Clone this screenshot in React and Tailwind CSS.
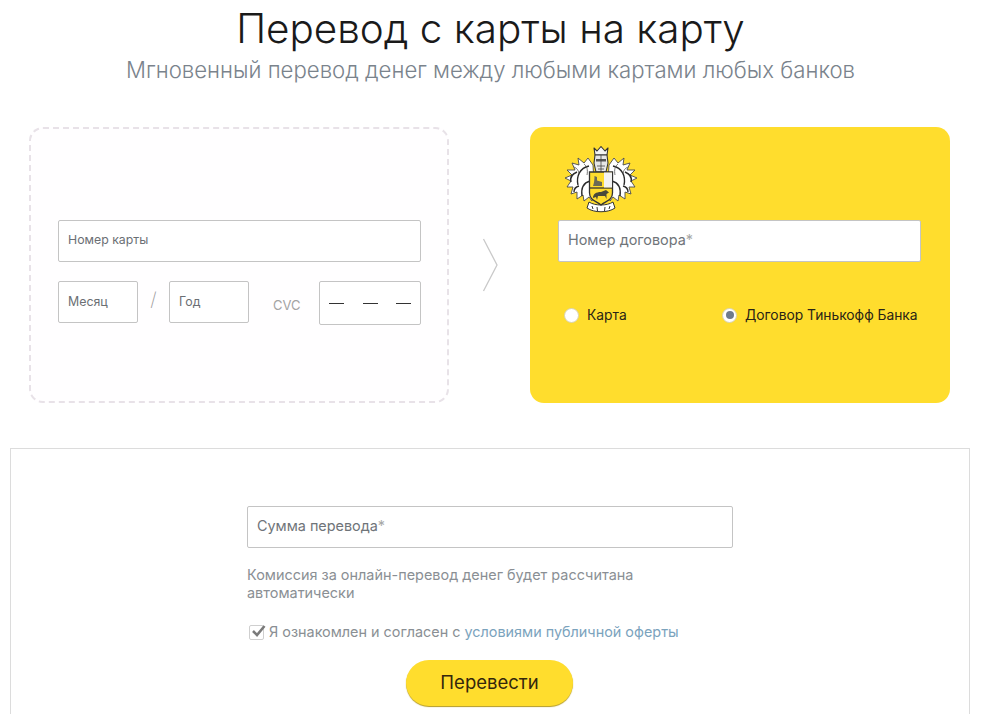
const sans = "font-['Inter','Liberation_Sans',sans-serif]";

function Leaf({ flip }) {
  return (
    <g transform={flip ? "translate(74 0) scale(-1 1)" : undefined}>
      <path
        d="M29 19 L24 12 L20 17 L14 12 L15 19 L8 17 L11 24 L3 24 L8 29 L1 32 L7 35 L3 41 L9 41 L7 48 L13 46 L13 53 L19 49 L20 55 L25 51 L28 55 L30 36 Z"
        fill="#fff"
        stroke="#4a4a4a"
        strokeWidth="0.9"
        strokeLinejoin="round"
      />
      <path
        d="M25 20 C16 22 12 30 14 39 M13 26 C8 28 6 32 7 36 M26 35 C19 37 17 43 18 50 M15 40 C11 41 10 44 10 46"
        fill="none"
        stroke="#2a2a2a"
        strokeWidth="1.4"
      />
      <path d="M20 18 C23 20 24 24 23 29 M10 21 C13 22 15 25 15 28" fill="none" stroke="#555" strokeWidth="0.8" />
    </g>
  );
}

function Logo() {
  return (
    <svg width="76" height="72" viewBox="0 0 76 72" className="block">
      <Leaf />
      <Leaf flip />
      <path d="M25 56 C31 60 43 60 49 56 L51 62 C44 67 30 67 23 62 Z" fill="#fff" stroke="#333" strokeWidth="1" strokeLinejoin="round" />
      <path d="M28 60 L29 63 M33 61 L33.5 65 M41 61 L40.5 65 M46 60 L45 63" stroke="#333" strokeWidth="1" />
      <path d="M30 2 L33 5 L37 0.5 L41 5 L44 2 L43 9 H31 Z" fill="#f4f4f4" stroke="#333" strokeWidth="1.1" strokeLinejoin="round" />
      <path d="M31 9 H43 L44 17 L42 26 H32 L30 17 Z" fill="#e6e6e6" stroke="#333" strokeWidth="1.1" strokeLinejoin="round" />
      <path d="M32 13 H42 V15.5 H32 Z" fill="#555" />
      <path d="M37 9 V26 M33 20 H41 M34 23 H40" stroke="#444" strokeWidth="0.8" />
      <path d="M25.5 26 H48.5 V47 C48.5 54 42 55 37 59 C32 55 25.5 54 25.5 47 Z" fill="#ffdd2d" stroke="#333" strokeWidth="1.3" />
      <path d="M25.5 42 H48.5" stroke="#333" strokeWidth="1.3" />
      <path d="M40 26.5 H48 V41.5 H40 Z" fill="#f3f3f3" />
      <path d="M29 40 C30 37 30.5 34 30.5 30 L33 31 L33 34.5 L38 36 V40 Z" fill="#6a6a55" />
      <path d="M29 52 C29 48 32 46 37 46 L42 44 L45 46.5 L42.5 48 L42.5 53 L41 50 H34 L33 54 L32 51 Z" fill="#4a4a3a" />
    </svg>
  );
}

function Field({ w, h = "h-[42px]", children, cls = "" }) {
  return (
    <div className={`${w} ${h} ${cls} flex items-center rounded-[2px] border border-[#c4c4c4] bg-white px-[9px]`}>
      {children}
    </div>
  );
}

export default function App() {
  return (
    <div className={`${sans} h-[714px] w-[981px] overflow-hidden bg-white`}>
      <div className="flex flex-col items-center pt-[4px]">
        <h1 className="text-[40.4px] leading-[50px] font-light text-[#1a1a1a]">Перевод с карты на карту</h1>
        <p className="mt-[2px] text-[22.2px] leading-[28px] font-light text-[#7a838c]">
          Мгновенный перевод денег между любыми картами любых банков
        </p>
      </div>

      <div className="mt-[43px] flex items-center pl-[29px]">
        <div className="flex h-[276px] w-[420px] flex-col gap-[19px] rounded-[14px] border-2 border-dashed border-[#e8e2e8] bg-[#fffeff] pt-[91px] pl-[27px]">
          <Field w="w-[363px]">
            <span className="pb-[2px] text-[12.3px] text-[#6b6f74]">Номер карты</span>
          </Field>
          <div className="flex items-start">
            <Field w="w-[80px]">
              <span className="text-[12.4px] text-[#6b6f74]">Месяц</span>
            </Field>
            <span className="w-[31px] pt-[5px] text-center text-[19px] font-extralight text-[#999]">/</span>
            <Field w="w-[80px]">
              <span className="text-[12.4px] text-[#6b6f74]">Год</span>
            </Field>
            <span className="ml-[24px] w-[46px] pt-[15px] text-[13px] text-[#a3a3a3]">CVC</span>
            <Field w="w-[102px]" h="h-[44px]" cls="justify-between">
              <span className="h-px w-[15px] bg-[#333]" />
              <span className="h-px w-[15px] bg-[#333]" />
              <span className="h-px w-[15px] bg-[#333]" />
            </Field>
          </div>
        </div>

        <svg width="81" height="56" viewBox="0 0 81 56" className="shrink-0">
          <path d="M34.5 2 L48 28 L34.5 54" fill="none" stroke="#c9c9c9" strokeWidth="1.3" />
        </svg>

        <div className="flex h-[276px] w-[420px] flex-col rounded-[14px] bg-[#ffdd2d] pt-[19px] pl-[28px]">
          <div className="ml-[6px] h-[74px]">
            <Logo />
          </div>
          <Field w="w-[363px]">
            <span className="pb-[3px] text-[14.4px] text-[#6f7479]">
              Номер договора<span className="text-[#a8a8a8]">*</span>
            </span>
          </Field>
          <div className="mt-[43px] flex items-center pl-[6px] text-[13.8px] text-[#2a2415]">
            <span className="h-[15px] w-[15px] rounded-full border border-[#d8d2b0] bg-white" />
            <span className="ml-[8px] w-[135px]">Карта</span>
            <span className="flex h-[15px] w-[15px] items-center justify-center rounded-full border border-[#d8d2b0] bg-white">
              <span className="h-[8px] w-[8px] rounded-full bg-[#6f7b8c]" />
            </span>
            <span className="ml-[8px] whitespace-nowrap">Договор Тинькофф Банка</span>
          </div>
        </div>
      </div>

      <div className="mx-[10px] mt-[45px] h-[300px] w-[960px] border border-[#dcdcdc] bg-white pt-[57px] pl-[236px]">
        <Field w="w-[486px]">
          <span className="pb-[3px] text-[14.4px] text-[#6f7479]">
            Сумма перевода<span className="text-[#a8a8a8]">*</span>
          </span>
        </Field>
        <p className="mt-[18px] w-[440px] text-[14.45px] leading-[18px] text-[#8a8f94]">
          Комиссия за онлайн-перевод денег будет рассчитана автоматически
        </p>
        <div className="mt-[19px] flex items-center pl-[2px] text-[14.4px] text-[#8a8f94]">
          <span className="relative top-[1px] h-[15px] w-[15px] rounded-[2px] border border-[#cfcfcf] bg-white">
            <svg width="17" height="15" viewBox="0 0 17 15" className="absolute -top-[2px] left-[0px]">
              <path d="M3 7 L7 11 L14.5 2" fill="none" stroke="#7a7a7a" strokeWidth="2.6" />
            </svg>
          </span>
          <span className="ml-[5px]">
            Я ознакомлен и согласен с <span className="text-[#7ba3bd]">условиями публичной оферты</span>
          </span>
        </div>
        <div className="mt-[17px] ml-[159px] flex h-[46px] w-[167px] items-center justify-center rounded-full bg-[#ffdd2d] text-[18.5px] text-[#33270c] shadow-[0_1px_1px_#b59b20]">
          Перевести
        </div>
      </div>
    </div>
  );
}
